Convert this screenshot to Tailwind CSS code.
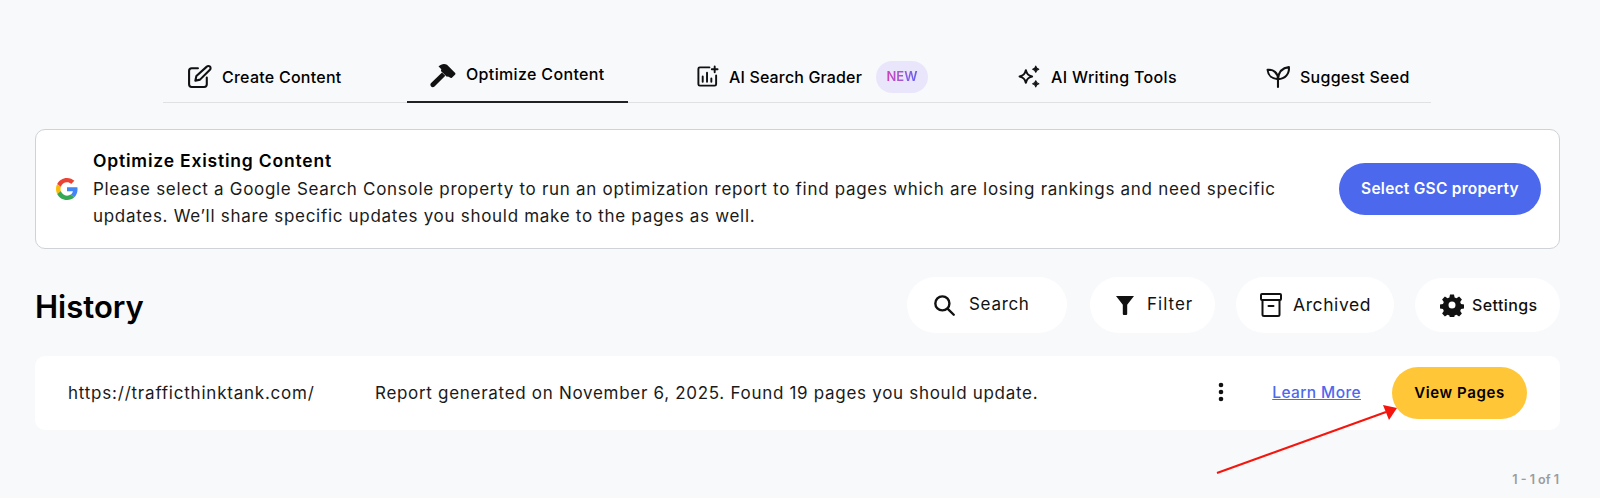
<!DOCTYPE html>
<html lang="en">
<head>
  <meta charset="UTF-8">
  <title>Optimize Content</title>
  <script src="https://cdn.jsdelivr.net/npm/@tailwindcss/browser@4"></script>
</head>
<body class="relative bg-[#f8f9fb] h-[498px] w-[1600px] overflow-hidden font-['Inter',sans-serif] text-black">
  <!-- tabs -->
  <nav class="ml-[163px] mt-[50px] w-[1268px] h-[53px] border-b border-[#dfe1e3] flex text-[16px] font-medium tracking-[0.25px]">
    <a class="ml-[24px] w-[220px] h-[52px] flex items-center gap-[10px] pt-[1px]">
      <svg class="w-[25px] h-[25px]" viewBox="0 0 24 24" fill="none" stroke="#111" stroke-width="2" stroke-linecap="round" stroke-linejoin="round"><path d="M10.500 4H4.500A2.500 2.500 0 0 0 2 6.500v13A2.500 2.500 0 0 0 4.500 22h12a2.500 2.500 0 0 0 2.500-2.500V13"/><path d="M19 2.500a2.100 2.100 0 0 1 3 3L12.500 15 8 16l1-4.500z"/></svg>
      <span>Create Content</span>
    </a>
    <a class="w-[221px] h-[53px] border-b-2 border-[#222] flex items-center gap-[10px] pl-[23px]">
      <svg class="w-[26px] h-[26px] mb-[2px]" viewBox="0 0 26 26" fill="#111"><path d="M4.500 24.500c-1 1-2.500 1-3.400 0-1-1-1-2.400 0-3.400L12 10.500l3.300 3.300z"/><path d="M8.500 4.500C11 1.800 14.500 1.200 17 2.800l8.200 8.200c.4.400.4 1 0 1.400l-3.300 3.300c-.4.400-1 .4-1.400 0l-2.500-1.300-1.200.4-5.900-5.900.4-1.700-2.200-2.200z"/></svg>
      <span class="pb-[3px] tracking-[0.35px]">Optimize Content</span>
    </a>
    <a class="ml-[68px] w-[321px] h-[52px] flex items-center gap-[10px] pt-[1px]">
      <svg class="w-[23px] h-[23px]" viewBox="0 0 24 24" fill="none" stroke="#111" stroke-width="2" stroke-linecap="round"><path d="M14 2.500H4A1.500 1.500 0 0 0 2.500 4v16A1.500 1.500 0 0 0 4 21.500h15.500A1.500 1.500 0 0 0 21 20v-9"/><path d="M7 17.500V12M11.500 17.500V8M16 17.500V14"/><path d="M19.500 1.500v6M16.500 4.500h6"/></svg>
      <span class="tracking-[0.15px]">AI Search Grader</span>
      <span class="ml-[4px] w-[52px] h-[32px] rounded-full bg-[#e9e6fb] flex items-center justify-center text-[13px] font-semibold tracking-normal"><span class="bg-gradient-to-r from-[#d43bb8] to-[#5a62f0] bg-clip-text text-transparent">NEW</span></span>
    </a>
    <a class="w-[249px] h-[52px] flex items-center gap-[9px] pt-[1px]">
      <svg class="w-[25px] h-[25px]" viewBox="0 0 24 24" fill="none" stroke="#111" stroke-width="2" stroke-linejoin="round"><path d="M8.500 6c.9 3.800 2.200 5.100 6 6-3.800.9-5.100 2.200-6 6-.9-3.800-2.200-5.100-6-6 3.800-.9 5.100-2.200 6-6z"/><path fill="#111" stroke-width="1" d="M18 2c.4 2 1 2.600 3 3-2 .4-2.600 1-3 3-.4-2-1-2.600-3-3 2-.4 2.600-1 3-3zM18 16c.4 2 1 2.600 3 3-2 .4-2.600 1-3 3-.4-2-1-2.600-3-3 2-.4 2.600-1 3-3z"/></svg>
      <span class="tracking-[0.35px]">AI Writing Tools</span>
    </a>
    <a class="h-[52px] flex items-center gap-[9px] pt-[1px]">
      <svg class="w-[25px] h-[25px]" viewBox="0 0 24 24" fill="none" stroke="#111" stroke-width="2" stroke-linecap="round" stroke-linejoin="round"><path d="M11.500 22v-7.500"/><path d="M11.500 14.500C6 14.500 2 11 1.500 5.500 7 5 11.500 8.500 11.500 14.500z"/><path d="M11.500 14.500c.5-6.500 4-10.800 10.500-11.500.5 6.500-3.500 11.500-10.500 11.500z"/></svg>
      <span>Suggest Seed</span>
    </a>
  </nav>

  <main class="ml-[35px] w-[1525px]">
    <!-- gsc card -->
    <section class="mt-[26px] h-[120px] bg-white border border-[#cfd2d6] rounded-[10px] flex items-center pl-[20px] pr-[18px]">
      <svg class="w-[22px] h-[22px] shrink-0" viewBox="0 0 48 48"><path fill="#EA4335" d="M24 9.500c3.540 0 6.710 1.220 9.210 3.600l6.850-6.850C35.900 2.380 30.470 0 24 0 14.620 0 6.510 5.380 2.560 13.220l7.980 6.190C12.430 13.720 17.740 9.500 24 9.500z"/><path fill="#4285F4" d="M46.980 24.550c0-1.570-.15-3.090-.38-4.550H24v9.020h12.940c-.58 2.960-2.260 5.480-4.780 7.180l7.730 6c4.510-4.180 7.090-10.360 7.090-17.650z"/><path fill="#FBBC05" d="M10.530 28.590c-.48-1.450-.76-2.990-.76-4.590s.27-3.140.76-4.590l-7.980-6.190C.92 16.460 0 20.120 0 24c0 3.880.92 7.540 2.560 10.780l7.970-6.190z"/><path fill="#34A853" d="M24 48c6.480 0 11.930-2.130 15.890-5.810l-7.730-6c-2.150 1.450-4.920 2.300-8.160 2.300-6.260 0-11.570-4.220-13.470-9.910l-7.980 6.190C6.510 42.620 14.620 48 24 48z"/></svg>
      <div class="ml-[15px] w-[1225px] pt-[1px]">
        <h2 class="text-[17.500px] font-semibold leading-[22px] tracking-[0.8px]">Optimize Existing Content</h2>
        <p class="mt-[4px] text-[17px] leading-[27px] tracking-[0.7px] text-[#1a1a1a]">Please select a Google Search Console property to run an optimization report to find pages which are losing rankings and need specific updates. We’ll share specific updates you should make to the pages as well.</p>
      </div>
      <button class="ml-auto w-[202px] h-[52px] rounded-full bg-[#4c68ec] text-white text-[15.500px] font-semibold tracking-[0.25px]">Select GSC property</button>
    </section>

    <!-- history header -->
    <div class="mt-[28px] h-[56px] flex items-center">
      <h1 class="text-[31px] font-semibold mt-[5px]">History</h1>
      <div class="ml-auto flex items-center text-[#111]">
        <button class="w-[160px] h-[56px] rounded-full bg-white flex items-center pl-[24px] gap-[12px] text-[17px] tracking-[0.7px]">
          <svg class="w-[26px] h-[26px]" viewBox="0 0 24 24" fill="none" stroke="#111" stroke-width="2.200" stroke-linecap="round"><circle cx="10.500" cy="10.500" r="6.500"/><path d="M15.500 15.500 21 21"/></svg>
          Search
        </button>
        <button class="ml-[23px] w-[125px] h-[56px] rounded-full bg-white flex items-center pl-[25px] gap-[12px] text-[17px] tracking-[1px]">
          <svg class="w-[20px] h-[22px]" viewBox="0 0 20 22" fill="#111"><path d="M1 2h18l-6.800 8.800V20a1 1 0 0 1-1 1H8.800a1 1 0 0 1-1-1v-9.200z"/></svg>
          Filter
        </button>
        <button class="ml-[21px] w-[158px] h-[56px] rounded-full bg-white flex items-center pl-[23px] gap-[10px] text-[17.500px] tracking-[0.6px]">
          <svg class="w-[24px] h-[26px]" viewBox="0 0 24 26" fill="none" stroke="#111" stroke-width="2" stroke-linejoin="round"><rect x="2" y="2" width="20" height="6" rx="1"/><path d="M3.500 8v14.500a1.500 1.500 0 0 0 1.500 1.500h14a1.500 1.500 0 0 0 1.500-1.500V8"/><path d="M9.500 14h5" stroke-linecap="round"/></svg>
          Archived
        </button>
        <button class="ml-[21px] w-[145px] h-[54px] rounded-full bg-white flex items-center pl-[25px] gap-[8px] text-[16px] font-medium tracking-[0.4px]">
          <svg class="w-[24px] h-[24px]" viewBox="0 0 24 24" fill="#111"><path fill-rule="evenodd" d="M10 1.500h4l.6 3 1.900.8 2.600-1.700 2.800 2.800-1.700 2.600.8 1.900 3 .6v4l-3 .6-.8 1.900 1.700 2.600-2.800 2.800-2.600-1.700-1.900.8-.6 3h-4l-.6-3-1.900-.8-2.600 1.700-2.800-2.800 1.700-2.600-.8-1.900-3-.6v-4l3-.6.8-1.900-1.700-2.600 2.800-2.800 2.600 1.700 1.900-.8zM12 8.500a3.500 3.500 0 1 0 0 7 3.500 3.500 0 0 0 0-7z"/></svg>
          Settings
        </button>
      </div>
    </div>

    <!-- report row -->
    <div class="mt-[23px] h-[74px] bg-white rounded-[10px] flex items-center pl-[33px] pr-[33px] text-[17px] tracking-[0.7px] text-[#1a1a1a]">
      <span class="w-[307px] pt-[2px] tracking-[0.78px]">https://trafficthinktank.com/</span>
      <span class="pt-[2px]">Report generated on November 6, 2025. Found 19 pages you should update.</span>
      <svg class="ml-auto w-[6px] h-[20px] mb-[3px]" viewBox="0 0 6 20" fill="#111"><circle cx="3" cy="3" r="2.300"/><circle cx="3" cy="10" r="2.300"/><circle cx="3" cy="17" r="2.300"/></svg>
      <a class="ml-[48px] text-[15.500px] font-medium tracking-[0.4px] text-[#4c68ec] underline">Learn More</a>
      <button class="ml-[31px] w-[135px] h-[52px] rounded-full bg-[#ffc638] text-[15px] font-semibold tracking-[0.6px] text-black">View Pages</button>
    </div>

    <p class="mt-[41px] pr-[1px] text-right text-[12.500px] font-semibold text-[#9a9da1]">1 - 1 of 1</p>
  </main>

  <!-- red annotation arrow -->
  <svg class="absolute left-0 top-0 pointer-events-none" width="1600" height="498" viewBox="0 0 1600 498"><path d="M1217 473 1386 412" stroke="#f5150d" stroke-width="2.200"/><path d="M1397 408 1383 405 1389 420z" fill="#f5150d"/></svg>
</body>
</html>
